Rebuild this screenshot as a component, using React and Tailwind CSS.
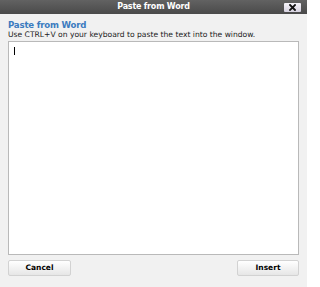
export default function App() {
  return (
    <div className="w-[307px] h-[287px] bg-[#f1f1f1] flex flex-col overflow-hidden" style={{ fontFamily: '"DejaVu Sans", Verdana, sans-serif' }}>
      <div className="h-[14px] bg-gradient-to-b from-[#626262] to-[#4a4a4a] relative flex items-center justify-center">
        <span className="text-white font-bold text-[8px] leading-none tracking-[-0.2px]">Paste from Word</span>
        <div className="absolute right-[6px] top-[3px] w-[17px] h-[9px] bg-gradient-to-b from-[#f6f4fa] to-[#d6d2e0] rounded-[1px] flex items-center justify-center">
          <svg width="7" height="7" viewBox="0 0 7 7">
            <path d="M1 1 L6 6 M6 1 L1 6" stroke="#111" strokeWidth="1.8" strokeLinecap="square" />
          </svg>
        </div>
      </div>
      <div className="px-[8px] pt-[6px] flex flex-col">
        <div className="text-[#3b7bbf] font-bold text-[8.6px] leading-[10px] tracking-[-0.2px]">Paste from Word</div>
        <div className="text-[#222] text-[7.6px] leading-[10px]">Use CTRL+V on your keyboard to paste the text into the window.</div>
        <div className="mt-[1px] h-[214px] w-[291px] bg-white border border-[#b9b9b9] relative">
          <span className="absolute left-[5px] top-[5px] w-px h-[8px] bg-black" />
        </div>
        <div className="mt-[5px] flex justify-between w-[291px]">
          <button className="w-[63px] h-[16px] border border-[#d2d2d2] rounded-[2px] bg-gradient-to-b from-white to-[#e6e6e6] text-black font-bold text-[7.5px] leading-none">Cancel</button>
          <button className="w-[62px] h-[16px] border border-[#d2d2d2] rounded-[2px] bg-gradient-to-b from-white to-[#e6e6e6] text-black font-bold text-[7.5px] leading-none">Insert</button>
        </div>
      </div>
    </div>
  );
}
